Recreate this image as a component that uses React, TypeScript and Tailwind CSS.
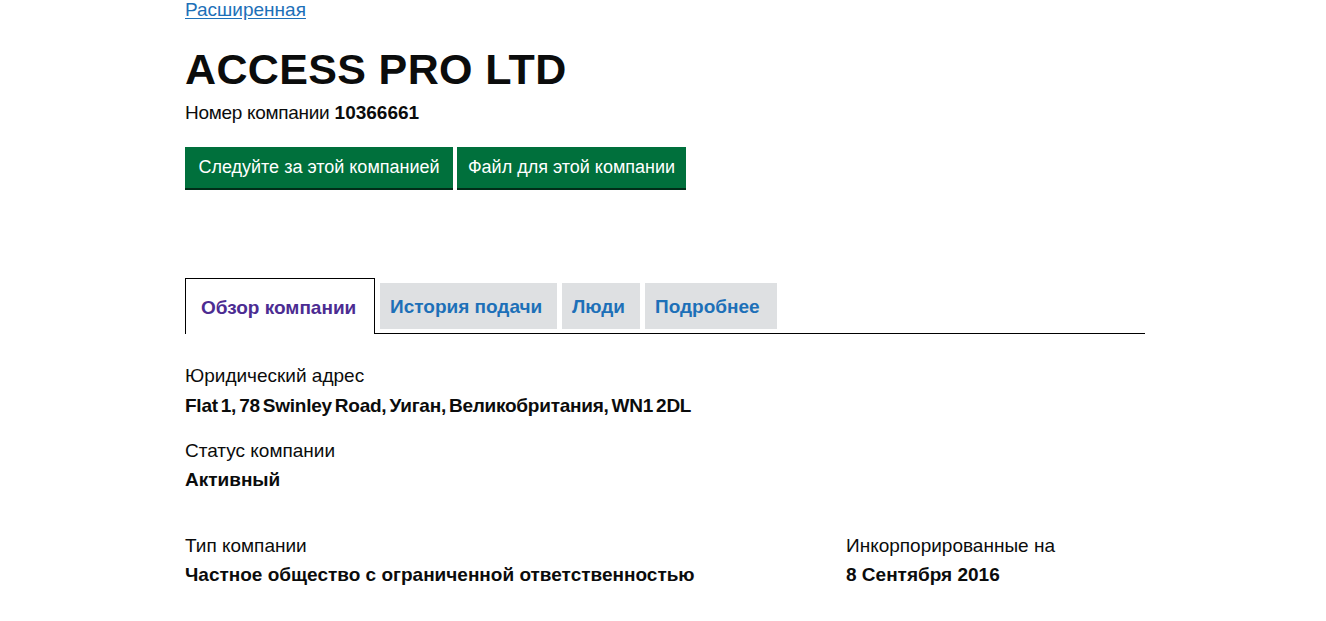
import React from "react";

export default function App() {
  return (
    <div className="min-h-[621px] bg-white font-['Liberation_Sans',Arial,sans-serif] text-[#0b0c0c]">
      <div className="ml-[185px] w-[960px]">
        <div className="h-[19px] text-[19px] leading-[19px]">
          <a href="#" className="text-[#1d70b8] underline underline-offset-[2px]">
            Расширенная
          </a>
        </div>
        <h1 className="mt-[29px] text-[43px] leading-[43px] font-bold tracking-[0.35px]">
          ACCESS PRO LTD
        </h1>
        <p className="mt-[12px] text-[19px] leading-[19px]">
          <span className="tracking-[-0.3px]">Номер компании</span>{" "}
          <strong className="font-bold">10366661</strong>
        </p>
        <div className="mt-[25px] flex gap-[4px]">
          <button className="flex h-[41px] w-[268px] items-center justify-center bg-[#00703c] text-[18px] text-white shadow-[0_2px_0_#002d18]">
            Следуйте за этой компанией
          </button>
          <button className="flex h-[41px] w-[229px] items-center justify-center bg-[#00703c] text-[18px] text-white shadow-[0_2px_0_#002d18]">
            Файл для этой компании
          </button>
        </div>

        <ul className="mt-[90px] flex items-end border-b border-black">
          <li className="-mb-px mr-[5px] flex h-[56px] w-[190px] items-center border border-b-0 border-black bg-white pl-[15px] pt-[4px] text-[19px] font-bold text-[#4c2c92]">
            Обзор компании
          </li>
          <li className="mb-[4px] mr-[5px] flex h-[46px] w-[177px] items-center bg-[#dee0e2] pl-[10px] pt-[2px] text-[19px] font-bold text-[#1d70b8]">
            История подачи
          </li>
          <li className="mb-[4px] mr-[5px] flex h-[46px] w-[78px] items-center bg-[#dee0e2] pl-[10px] pt-[2px] text-[19px] font-bold text-[#1d70b8]">
            Люди
          </li>
          <li className="mb-[4px] flex h-[46px] w-[132px] items-center bg-[#dee0e2] pl-[10px] pt-[2px] text-[19px] font-bold text-[#1d70b8]">
            Подробнее
          </li>
        </ul>

        <dl className="mt-[29px] text-[19px] leading-[25px]">
          <dt>Юридический адрес</dt>
          <dd className="mt-[5px] font-bold tracking-[-0.25px] [word-spacing:-2px]">
            Flat 1, 78 Swinley Road, Уиган, Великобритания, WN1 2DL
          </dd>
          <dt className="mt-[20px]">Статус компании</dt>
          <dd className="mt-[4px] font-bold">Активный</dd>
        </dl>

        <div className="mt-[41px] grid grid-cols-[661px_1fr] text-[19px] leading-[25px]">
          <dl>
            <dt>Тип компании</dt>
            <dd className="mt-[4px] font-bold">
              Частное общество с ограниченной ответственностью
            </dd>
          </dl>
          <dl>
            <dt>Инкорпорированные на</dt>
            <dd className="mt-[4px] font-bold">8 Сентября 2016</dd>
          </dl>
        </div>
      </div>
    </div>
  );
}
